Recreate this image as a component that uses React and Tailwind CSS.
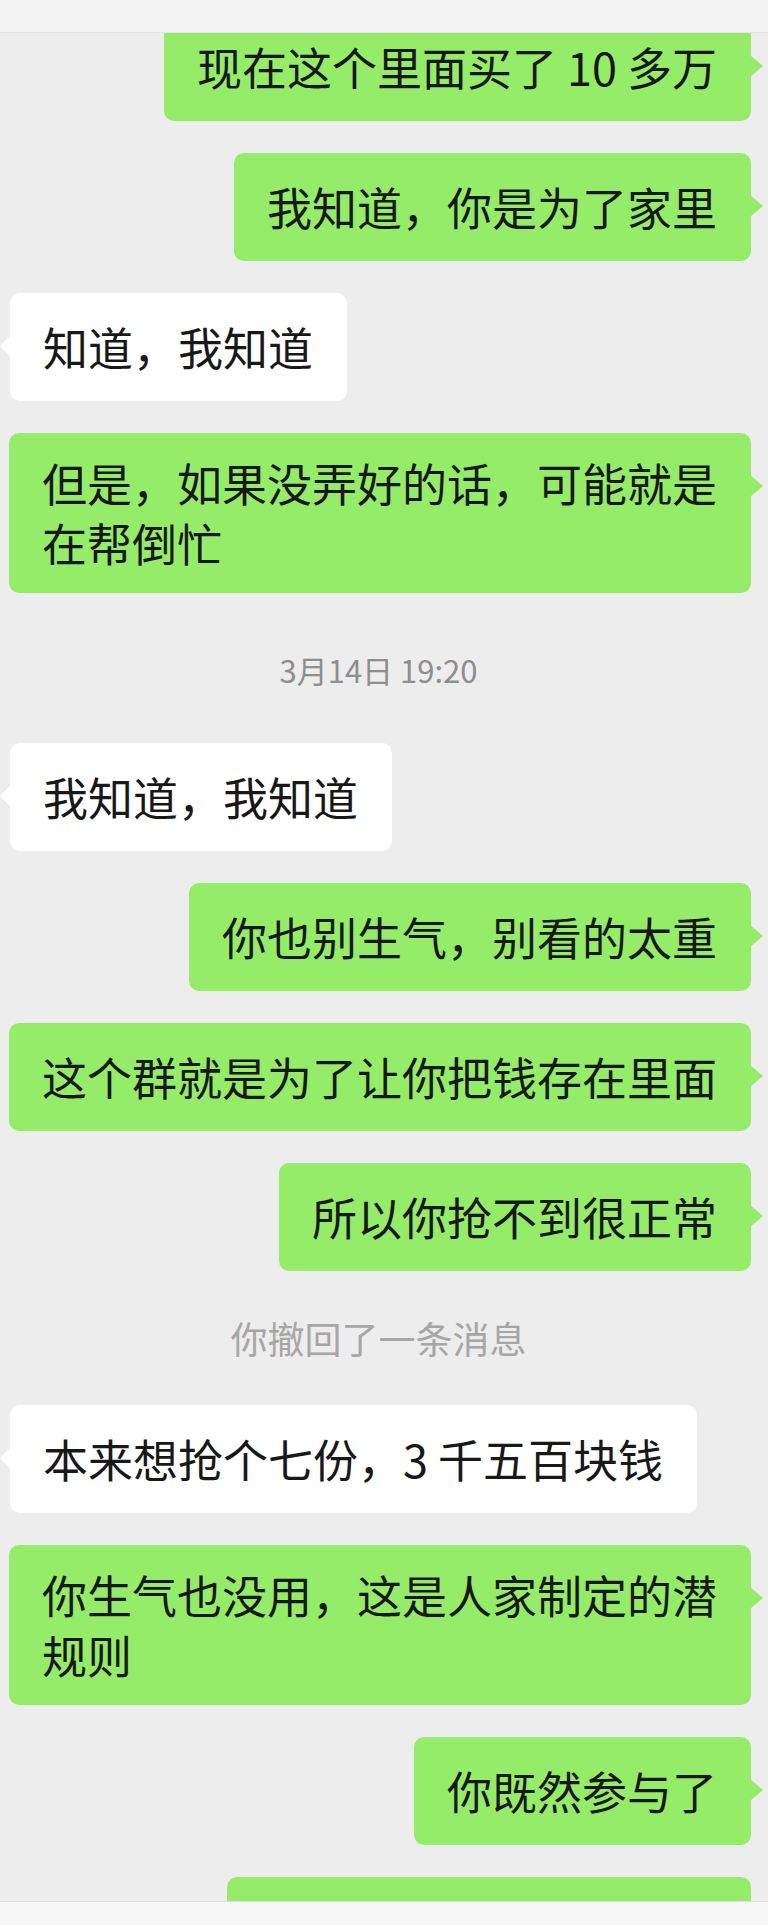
import React from 'react';

const messages = [
  { type: 'me', text: '现在这个里面买了 10 多万' },
  { type: 'me', text: '我知道，你是为了家里' },
  { type: 'other', text: '知道，我知道' },
  { type: 'me', text: '但是，如果没弄好的话，可能就是在帮倒忙' },
  { type: 'time', text: '3月14日 19:20' },
  { type: 'other', text: '我知道，我知道' },
  { type: 'me', text: '你也别生气，别看的太重' },
  { type: 'me', text: '这个群就是为了让你把钱存在里面' },
  { type: 'me', text: '所以你抢不到很正常' },
  { type: 'system', text: '你撤回了一条消息' },
  { type: 'other', text: '本来想抢个七份，3 千五百块钱' },
  { type: 'me', text: '你生气也没用，这是人家制定的潜规则' },
  { type: 'me', text: '你既然参与了' },
  { type: 'me', text: '', width: 'w-[524px]' },
];

const Bubble = ({ msg }) => {
  const isMe = msg.type === 'me';
  return (
    <div className={`flex items-start ${isMe ? 'justify-end' : 'justify-start'}`}>
      {!isMe && (
        <div className="shrink-0 mt-[42px] -mr-px w-0 h-0 border-y-[11px] border-y-transparent border-r-[11px] border-r-white" />
      )}
      <div
        className={`flex items-center min-h-[108px] max-w-[742px] rounded-[10px] pl-[33px] pr-[34px] py-[20px] text-[45px] leading-[60px] text-[#181818] ${
          isMe ? 'bg-[#95ec69]' : 'bg-white'
        } ${msg.width || ''}`}
      >
        {msg.text}
      </div>
      {isMe && (
        <div className="shrink-0 mt-[42px] -ml-px w-0 h-0 border-y-[11px] border-y-transparent border-l-[13px] border-l-[#95ec69]" />
      )}
    </div>
  );
};

const App = () => {
  return (
    <div className="w-full h-[1925px] flex flex-col bg-[#ededed] overflow-hidden font-['Noto_Sans_CJK_SC','Noto_Sans',sans-serif]">
      <div className="h-[33px] shrink-0 bg-[#f4f4f4] border-b border-[#e4e4e4] z-10" />

      <div className="flex-1 overflow-hidden">
        <div className="-mt-[20px] pl-0 pr-[5px] flex flex-col gap-[32px]">
          {messages.map((msg, i) => {
            if (msg.type === 'time') {
              return (
                <div key={i} className="h-[86px] flex items-center justify-center pt-[3px] pr-[6px] text-[31px] leading-[40px] text-[#8e8e8e]">
                  {msg.text}
                </div>
              );
            }
            if (msg.type === 'system') {
              return (
                <div key={i} className="h-[70px] flex items-center justify-center pr-[6px] text-[37px] leading-[48px] text-[#a6a6a6]">
                  {msg.text}
                </div>
              );
            }
            return <Bubble key={i} msg={msg} />;
          })}
        </div>
      </div>

      <div className="h-[24px] shrink-0 bg-[#f7f7f7] border-t border-[#dedede]" />
    </div>
  );
};

export default App;
